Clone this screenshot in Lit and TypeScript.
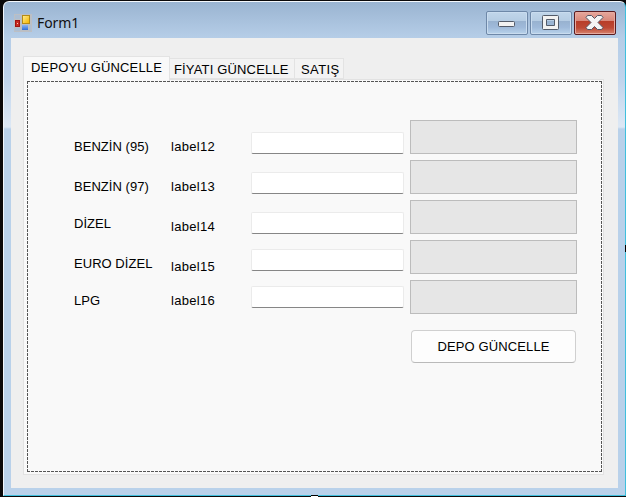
import { LitElement, html, css } from "lit";
import { customElement } from "lit/decorators.js";

interface FuelRow {
  name: string;
  value: string;
  nameTop: number;
  valueTop: number;
  boxTop: number;
}

const ROWS: FuelRow[] = [
  { name: "BENZİN (95)", value: "label12", nameTop: 19, valueTop: 19, boxTop: 12 },
  { name: "BENZİN (97)", value: "label13", nameTop: 19, valueTop: 19, boxTop: 12 },
  { name: "DİZEL", value: "label14", nameTop: 16, valueTop: 19, boxTop: 12 },
  { name: "EURO DİZEL", value: "label15", nameTop: 16, valueTop: 19, boxTop: 9 },
  { name: "LPG", value: "label16", nameTop: 13, valueTop: 13, boxTop: 6 },
];

@customElement("fuel-form")
class FuelForm extends LitElement {
  static styles = css`
    :host { display: block; padding: 38px 0 0 46px; }
    .row { display: grid; grid-template-columns: 97px 80px 159px 167px; height: 40px; align-items: start; }
    .text { line-height: 16px; white-space: nowrap; letter-spacing: 0.04px; }
    .value { letter-spacing: 0.3px; }
    .box { box-sizing: border-box; width: 153px; height: 22px; background: #fff;
      border: 1px solid #ebebeb; border-bottom-color: #868686; border-radius: 2px; }
    .bar { box-sizing: border-box; height: 34px; background: #e6e6e6; border: 1px solid #bcbcbc; }
    .button { display: block; box-sizing: border-box; width: 165px; height: 33px; margin: 10px 0 0 337px; padding: 0;
      background: #fdfdfd; border: 1px solid #d0d0d0; border-bottom-color: #bababa; border-radius: 4px;
      font: inherit; letter-spacing: 0.12px; color: #000; }
  `;
  render() {
    return html`
      ${ROWS.map((r) => html`
        <div class="row">
          <span class="text" style="margin-top:${r.nameTop}px">${r.name}</span>
          <span class="text value" style="margin-top:${r.valueTop}px">${r.value}</span>
          <div class="box" style="margin-top:${r.boxTop}px"></div>
          <div class="bar"></div>
        </div>`)}
      <button class="button">DEPO GÜNCELLE</button>
    `;
  }
}

@customElement("title-bar")
class TitleBar extends LitElement {
  static styles = css`
    :host { display: flex; height: 36px; box-sizing: border-box; padding: 9px 9px 0 10px; }
    .logo { display: block; margin-top: 3px; }
    .title { flex: 1; margin-left: 4px; font: 14px/24px "Noto Sans", "Open Sans", sans-serif; letter-spacing: -0.1px; color: #111; }
    .buttons { display: flex; gap: 2px; }
    .control { display: grid; place-items: center; box-sizing: border-box; width: 42px; height: 24px; border: 1px solid #6e88a8;
      border-radius: 2px; box-shadow: inset 0 0 0 1px #c9dcef;
      background: linear-gradient(#c1d6ea 0, #b5cce3 42%, #98b2d0 43%, #9fbada 70%, #b9d3eb 100%); }
    .close { border-color: #5b1c20; box-shadow: inset 0 0 0 1px #e6aaa0;
      background: linear-gradient(#e6a79c 0, #d88779 42%, #b83d29 43%, #bd4935 72%, #d78470 100%); }
  `;
  render() {
    return html`
      <svg class="logo" width="19" height="18" viewBox="0 0 19 18">
        <defs>
          <linearGradient id="y" x2="1" y2="1"><stop stop-color="#ffe98a" /><stop offset="1" stop-color="#f6b800" /></linearGradient>
          <linearGradient id="b" y2="1" x2="0"><stop stop-color="#8ab4f2" /><stop offset="1" stop-color="#2f6fd8" /></linearGradient>
        </defs>
        <rect x="0" y="0" width="18" height="18" fill="#bcbfc4" />
        <path d="M1 1h5v4H1zM1 14h5v3H1zM15 11h2v6h-2z" fill="#adbed2" />
        <rect x="1" y="6" width="5" height="7" fill="#a01210" />
        <rect x="2" y="7" width="3" height="5" fill="#c82a20" />
        <rect x="3" y="9" width="1" height="1" fill="#ffd0c0" />
        <rect x="8" y="1" width="8" height="9" fill="#b58b15" />
        <rect x="9" y="2" width="6" height="7" fill="url(#y)" />
        <rect x="8" y="11" width="6" height="5" fill="url(#b)" />
      </svg>
      <span class="title">Form1</span>
      <div class="buttons">
        <div class="control">
          <svg width="40" height="22"><rect x="11.5" y="9.5" width="16" height="5" rx="1" fill="#f2f2f2" stroke="#535b69" /></svg>
        </div>
        <div class="control">
          <svg width="40" height="22"><path d="M12.5 3.5h14a1 1 0 0 1 1 1v12a1 1 0 0 1-1 1h-14a1 1 0 0 1-1-1v-12a1 1 0 0 1 1-1zM15.5 7.5v6h8v-6z" fill="#f2f2f2" fill-rule="evenodd" stroke="#535b69" /></svg>
        </div>
        <div class="control close">
          <svg width="40" height="22"><path d="M12.5 3.5H16.5L19.5 6.500L22.5 3.5H26.5L28 5.500L23 10.500L28 15.500L26.5 17.500H22.5L19.5 14.500L16.5 17.500H12.500L11 15.500L16 10.500L11 5.500Z" fill="#f4f4f4" stroke="#535666" stroke-linejoin="round" /></svg>
        </div>
      </div>
    `;
  }
}

@customElement("app-root")
class AppRoot extends LitElement {
  static styles = css`
    :host { display: block; width: 626px; height: 497px; box-sizing: border-box; padding: 1px 0 1px 3px; background: #0a0809; overflow: hidden;
      position: relative; color: #000; font: 13px "Liberation Sans", sans-serif; }
    .window { display: flex; flex-direction: column; box-sizing: border-box; width: 623px; height: 495px;
      border: solid; border-width: 1px; border-color: #f4f8fc #3fbfdd #3fbfdd #f0f5fb; border-top-left-radius: 6px; border-top-right-radius: 6px;
      background: linear-gradient(#9ab4d1 0, #b5cde7 35px, #bfd4ec 76px, #dde8f5 125px, #b9d1ea 127px, #b9d1ea 100%); }
    title-bar { flex: none; }
    .client { flex: none; box-sizing: border-box; margin: 0 7px; height: 450px; padding: 18px 14px 13px 12px; background: #efefef; }
    .tabs { display: flex; align-items: flex-end; height: 23px; }
    .tab { box-sizing: border-box; height: 21px; border: 1px solid #e3e3e3; border-left: 0; padding-left: 4px; background: #f3f3f3;
      line-height: 21px; letter-spacing: 0.16px; white-space: nowrap; }
    .selected { height: 25px; margin-bottom: -2px; width: 147px; padding-left: 7px; background: #f9f9f9; border-left: 1px solid #e3e3e3; border-bottom: 0; position: relative; }
    .second { width: 125px; }
    .third { width: 49px; padding-left: 6px; letter-spacing: 0.4px; }
    .pane { box-sizing: border-box; width: 581px; height: 396px; border: 1px solid #e2e2e2; background: #f9f9f9; padding: 1px 0 0 3px; }
    .page { box-sizing: border-box; width: 575px; height: 391px;
      background:
        repeating-linear-gradient(90deg, #555 0 3px, transparent 3px 4px) 0 0 / 100% 1px no-repeat,
        repeating-linear-gradient(90deg, #555 0 3px, transparent 3px 4px) 0 100% / 100% 1px no-repeat,
        repeating-linear-gradient(#555 0 3px, transparent 3px 4px) 0 0 / 1px 100% no-repeat,
        repeating-linear-gradient(#555 0 3px, transparent 3px 4px) 100% 0 / 1px 100% no-repeat; padding: 1px; }
    .handle-right { position: absolute; right: 0; top: 245px; width: 1px; height: 7px; background: #000; }
    .handle-bottom { position: absolute; left: 311px; bottom: 0; width: 7px; height: 2px; box-sizing: border-box; background: #fff; border-top: 1px solid #000; }
  `;
  render() {
    return html`
      <div class="window">
        <title-bar></title-bar>
        <div class="client">
          <div class="tabs">
            <div class="tab selected">DEPOYU GÜNCELLE</div>
            <div class="tab second">FİYATI GÜNCELLE</div>
            <div class="tab third">SATIŞ</div>
          </div>
          <div class="pane"><div class="page"><fuel-form></fuel-form></div></div>
        </div>
      </div>
      <div class="handle-right"></div>
      <div class="handle-bottom"></div>
    `;
  }
}
